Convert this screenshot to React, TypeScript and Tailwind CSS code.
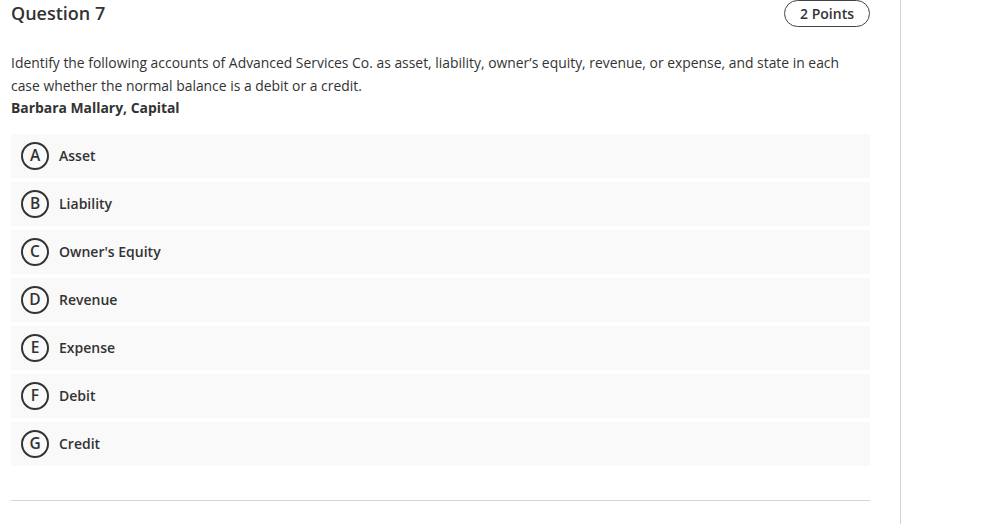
const OPTIONS = [
  { key: "A", label: "Asset" },
  { key: "B", label: "Liability" },
  { key: "C", label: "Owner's Equity" },
  { key: "D", label: "Revenue" },
  { key: "E", label: "Expense" },
  { key: "F", label: "Debit" },
  { key: "G", label: "Credit" },
];

export default function App() {
  return (
    <div className="flex min-h-[524px] bg-white text-[#333] font-['Open_Sans',sans-serif]">
      <div className="w-[901px] shrink-0 border-r border-[#d0d0d0] pl-[11px] pr-[30px]">
        <div className="flex items-start justify-between h-[27px]">
          <h2 className="text-[18px] leading-[26px] font-semibold">Question 7</h2>
          <span className="flex items-center h-[27px] px-[15px] rounded-full border border-[#444] text-[14px] font-semibold">
            2 Points
          </span>
        </div>

        <div className="mt-[24px] text-[13.9px] leading-[23px]">
          <p>
            Identify the following accounts of Advanced Services Co. as asset, liability, owner’s equity, revenue, or expense, and state in each case whether the normal balance is a debit or a credit.
          </p>
          <p className="font-bold -mt-[1px]">Barbara Mallary, Capital</p>
        </div>

        <div className="mt-[15px] flex flex-col gap-[4px]">
          {OPTIONS.map((o) => (
            <div key={o.key} className="flex items-center h-[44px] bg-[#f9f9f9] pl-[10px]">
              <span className="flex items-center justify-center w-[28px] h-[28px] rounded-full border-2 border-[#333] text-[15.5px] font-semibold leading-none">
                {o.key}
              </span>
              <span className="ml-[10px] text-[14px] font-semibold -mt-[1px]">{o.label}</span>
            </div>
          ))}
        </div>

        <div className="mt-[34px] border-t border-[#d4d4d4]" />
      </div>
    </div>
  );
}
